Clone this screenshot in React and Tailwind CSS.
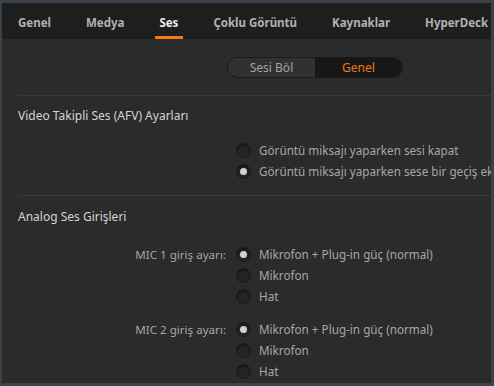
import React from 'react';

const tabs = ['Genel', 'Medya', 'Ses', 'Çoklu Görüntü', 'Kaynaklar', 'HyperDeck'];

const Radio = ({ checked }) => (
  <span className="flex h-[15px] w-[15px] shrink-0 items-center justify-center rounded-full border border-[#1a1a1a] bg-[#252525] shadow-[inset_0_1px_2px_rgba(0,0,0,0.6)]">
    {checked && <span className="h-[7px] w-[7px] rounded-full bg-[#d2d2d2]" />}
  </span>
);

const Option = ({ checked, label }) => (
  <div className="flex h-[21px] items-center gap-[8px] whitespace-nowrap">
    <Radio checked={checked} />
    <span className="text-[11.7px] text-[#a6a6a6]">{label}</span>
  </div>
);

const MicGroup = ({ name }) => (
  <div className="flex">
    <div className="flex h-[21px] w-[234px] shrink-0 items-center justify-end pr-[10px] text-[11.6px] text-[#a6a6a6] whitespace-nowrap">
      {name}
    </div>
    <div className="flex flex-col">
      <Option checked label="Mikrofon + Plug-in güç (normal)" />
      <Option label="Mikrofon" />
      <Option label="Hat" />
    </div>
  </div>
);

export default function App() {
  return (
    <div
      className="h-[386px] w-[494px] bg-[#39424a] pb-[3px] pl-[2px] pr-[3px] pt-[3px]"
      style={{ fontFamily: '"Noto Sans", "Open Sans", sans-serif' }}
    >
      <div className="flex h-full flex-col overflow-hidden bg-[#2b2b2b]">
        {/* tab bar */}
        <div className="flex h-[36px] shrink-0 items-stretch gap-[35px] bg-[#1e1e1e] pl-[16px] whitespace-nowrap">
          {tabs.map((t) => (
            <div key={t} className="relative flex items-center pt-[4px] text-[11.5px] font-bold">
              <span className={t === 'Ses' ? 'text-[#ececec]' : 'text-[#b1b1b1]'}>{t}</span>
              {t === 'Ses' && (
                <span className="absolute bottom-0 left-[-4px] right-[-5px] h-[3px] bg-[#f07d12]" />
              )}
            </div>
          ))}
        </div>

        {/* segmented control */}
        <div className="mt-[18px] flex pl-[225px]">
          <div className="flex h-[21px] w-[176px] overflow-hidden rounded-full border border-[#191919] text-[12px]">
            <div className="flex flex-1 items-center justify-center bg-[#313131] text-[#a3a3a3]">Sesi Böl</div>
            <div className="flex flex-1 items-center justify-center bg-[#171717] text-[#ee7a12]">Genel</div>
          </div>
        </div>

        {/* AFV section */}
        <div className="ml-[16px] mt-[17px] border-t border-[#3a3a3a]" />
        <div className="pl-[16px] pt-[11px] text-[12px] text-[#d4d4d4]">Video Takipli Ses (AFV) Ayarları</div>
        <div className="mt-[15px] flex flex-col pl-[234px]">
          <Option label="Görüntü miksajı yaparken sesi kapat" />
          <Option checked label="Görüntü miksajı yaparken sese bir geçiş ekle" />
        </div>

        {/* analog inputs */}
        <div className="ml-[16px] mt-[13px] border-t border-[#3a3a3a]" />
        <div className="pl-[16px] pt-[12px] text-[12px] text-[#d4d4d4]">Analog Ses Girişleri</div>
        <div className="mt-[18px] flex flex-col gap-[12px]">
          <MicGroup name="MIC 1 giriş ayarı:" />
          <MicGroup name="MIC 2 giriş ayarı:" />
        </div>
      </div>
    </div>
  );
}
